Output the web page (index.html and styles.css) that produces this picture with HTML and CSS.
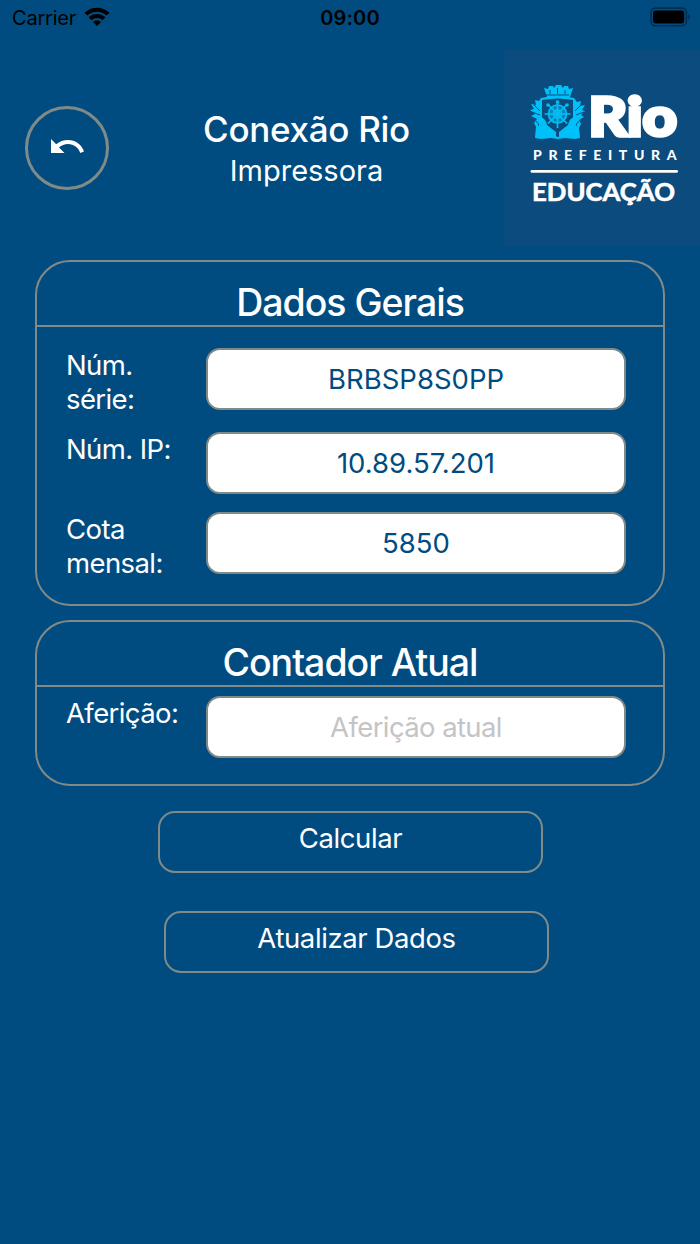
FILE: index.html
```
<!DOCTYPE html>
<html lang="pt-br">
<head>
    <meta charset="utf-8">
    <title>Conexão Rio - Impressora</title>
    <link rel="stylesheet" href="styles.css">
</head>
<body>
    <div class="status-bar">
        <div class="carrier">
            <span>Carrier</span>
            <svg width="26" height="20" viewBox="0 0 26 20">
                <g fill="none" stroke="#000" stroke-width="4">
                    <path d="M1.900 7.200A15.800 15.800 0 0 1 24.100 7.200"/>
                    <path d="M6 11.800A10 10 0 0 1 20 11.800"/>
                </g>
                <path d="M13 19l-4-4.100a5.600 5.600 0 0 1 8 0z"/>
            </svg>
        </div>
        <span class="time">09:00</span>
        <div class="battery">
            <svg width="42" height="20" viewBox="0 0 42 20">
                <rect x="1" y="1.100" width="35.400" height="17.600" rx="4.500" fill="none" stroke="#002f50" stroke-width="1.600"/>
                <rect x="3" y="3.500" width="31.200" height="13" rx="2.400"/>
                <path d="M38.200 7a3.400 3.400 0 0 1 0 6z" fill="#002f50"/>
            </svg>
        </div>
    </div>

    <header class="header">
        <button class="back" type="button" aria-label="Voltar">
            <svg width="34" height="16" viewBox="0 0 34 16">
                <path fill="#fff" d="M1 0l5.200 5.200C9.500 2.500 13.500 1 18 1c7.600 0 13.600 4.600 16 11.500l-3.800 1.400C28.500 8.500 23.800 5 18 5c-3.400 0-6.600 1.300-9 3.500l5.500 5.500H1z"/>
            </svg>
        </button>
        <div class="titles">
            <h1>Conexão Rio</h1>
            <p>Impressora</p>
        </div>
        <svg class="logo" width="196" height="196" viewBox="504 50 196 196">
            <!-- brasao -->
            <g fill="#00c0f8">
                <path d="M544 88l4 1 1-3h4l1 2 2-3h5l2 3 1-2h4l1 3 4-1-3 9h-23z"/>
                <path d="M541 98q16-4 33 0l3 4 4-1-1 5 5-1-3 5 3 1-4 4 3 2-5 3 2 4-2 4 1 10-5 1-10-1-7 1-7-1-10 1-6-1 1-11-2-4 3-4-6-3 4-2-5-4 4-1-3-5 5 1-1-5 4 1z"/>
            </g>
            <path d="M542 100q16-3 31 0v19q-1 10-7 15l-8 3-8-3q-7-5-8-15z" fill="#0b4b7e"/>
            <g fill="none" stroke="#0b4b7e" stroke-width="1">
                <path d="M546 95h23M550 90v4M557.500 88v6M565 90v4"/>
                <path d="M534 105l6 6M532 112l8 3M581 105l-6 6M584 112l-8 3M536 121q6 5 2 14M579 121q-6 5-2 14"/>
            </g>
            <circle cx="557.500" cy="114" r="9" fill="#0785b8"/>
            <g fill="none" stroke="#00c0f8" stroke-width="1.700">
                <circle cx="557.500" cy="114" r="9"/>
                <circle cx="557.500" cy="114" r="4"/>
                <path d="M557.500 101v27M544.500 114h26M548 104.500l19 19M567 104.500l-19 19"/>
            </g>
            <g fill="#00c0f8">
                <circle cx="557.500" cy="102" r="1.800"/>
                <circle cx="548" cy="105" r="1.800"/>
                <circle cx="567" cy="105" r="1.800"/>
                <path d="M541 117q5 2 6 8l9 7v6h-18q-5-5 1-12zM574 117q-5 2-6 8l-9 7v6h18q5-5-1-12z"/>
            </g>
            <g fill="#fff" class="logo-text">
                <text x="588.500" y="136" font-size="53" font-weight="900" stroke="#fff" stroke-width="3.500" textLength="88.500" lengthAdjust="spacingAndGlyphs">Rio</text>
                <text x="533" y="160" font-size="14" font-weight="900" textLength="143.500">PREFEITURA</text>
                <rect x="530.500" y="170" width="147.500" height="2.800" rx="1.400"/>
                <text x="532" y="201" font-size="24" font-weight="700" stroke="#fff" stroke-width=".6" textLength="143" lengthAdjust="spacingAndGlyphs">EDUCAÇÃO</text>
            </g>
        </svg>
    </header>

    <form>
        <section class="card">
            <h2>Dados Gerais</h2>
            <div class="rows">
                <div class="row"><label for="serie">Núm. série:</label> <input id="serie" value="BRBSP8S0PP"></div>
                <div class="row"><label for="ip">Núm. IP:</label> <input id="ip" value="10.89.57.201"></div>
                <div class="row"><label for="cota">Cota mensal:</label> <input id="cota" value="5850"></div>
            </div>
        </section>
        <section class="card card-contador">
            <h2>Contador Atual</h2>
            <div class="rows">
                <div class="row"><label for="afericao">Aferição:</label> <input id="afericao" placeholder="Aferição atual"></div>
            </div>
        </section>
        <div class="buttons">
            <button class="btn" type="button">Calcular</button>
            <button class="btn btn-atualizar" type="button">Atualizar Dados</button>
        </div>
    </form>
</body>
</html>
```
FILE: styles.css
```
* {
    margin: 0;
    padding: 0;
    box-sizing: border-box;
}

body {
    min-height: 1244px;
    background-color: #004c80;
    color: #fff;
    font-family: Inter, "Liberation Sans", sans-serif;
    font-size: 27.5px;
}

.status-bar {
    display: grid;
    grid-template-columns: 1fr auto 1fr;
    height: 50px;
    padding: 7px 8px 0 12px;
    color: #000;
    font-size: 20px;
    line-height: 22px;
}

.carrier {
    display: flex;
    gap: 8px;
}

.carrier span {
    letter-spacing: -0.2px;
}

.time {
    margin-left: -4px;
    font-weight: 600;
    font-size: 20px;
    letter-spacing: 0.2px;
}

.battery {
    display: flex;
    justify-content: flex-end;
}

.header {
    display: flex;
    height: 196px;
    padding-left: 25px;
}

.back {
    display: flex;
    align-items: center;
    justify-content: center;
    width: 84px;
    height: 84px;
    margin-top: 56px;
    padding-bottom: 3px;
    border: 3px solid #808a87;
    border-radius: 50%;
    background: none;
}

.titles {
    flex: 1;
    padding-top: 57px;
    text-align: center;
}

.titles h1 {
    font-size: 35px;
    font-weight: 500;
    letter-spacing: -0.3px;
    line-height: 44px;
}

.titles p {
    font-size: 29px;
    line-height: 39px;
}

.logo {
    background-color: #0b4b7e;
}

.logo-text {
    font-family: Lato, sans-serif;
}

.card {
    width: 630px;
    height: 346px;
    margin: 14px auto 0;
    border: 2px solid #808a87;
    border-radius: 35px;
}

.card h2 {
    height: 65px;
    padding-top: 18px;
    border-bottom: 2px solid #808a87;
    font-size: 37.5px;
    font-weight: 500;
    letter-spacing: -1px;
    line-height: 46px;
    text-align: center;
}

.rows {
    display: flex;
    flex-direction: column;
    gap: 16px;
    padding: 21px 37px 0 29px;
}

.row {
    display: flex;
    justify-content: space-between;
    min-height: 64px;
}

.row label {
    width: 120px;
    letter-spacing: -0.6px;
    line-height: 34px;
}

.row input {
    width: 420px;
    height: 62px;
    border: 2px solid #808a87;
    border-radius: 14px;
    background-color: #fff;
    color: #004c80;
    font: inherit;
    text-align: center;
}

.row input::placeholder {
    color: #c4c4c6;
    letter-spacing: -0.6px;
}

.card-contador {
    height: 166px;
}

.card-contador .rows {
    padding-top: 9px;
}

.buttons {
    display: flex;
    flex-direction: column;
    gap: 38px;
    padding: 25px 0 0 158px;
}

.btn {
    width: 385px;
    height: 62px;
    padding-bottom: 8px;
    border: 2px solid #808a87;
    border-radius: 17px;
    background: none;
    color: #fff;
    font: inherit;
    letter-spacing: -0.4px;
}

.btn-atualizar {
    margin-left: 6px;
}
```
